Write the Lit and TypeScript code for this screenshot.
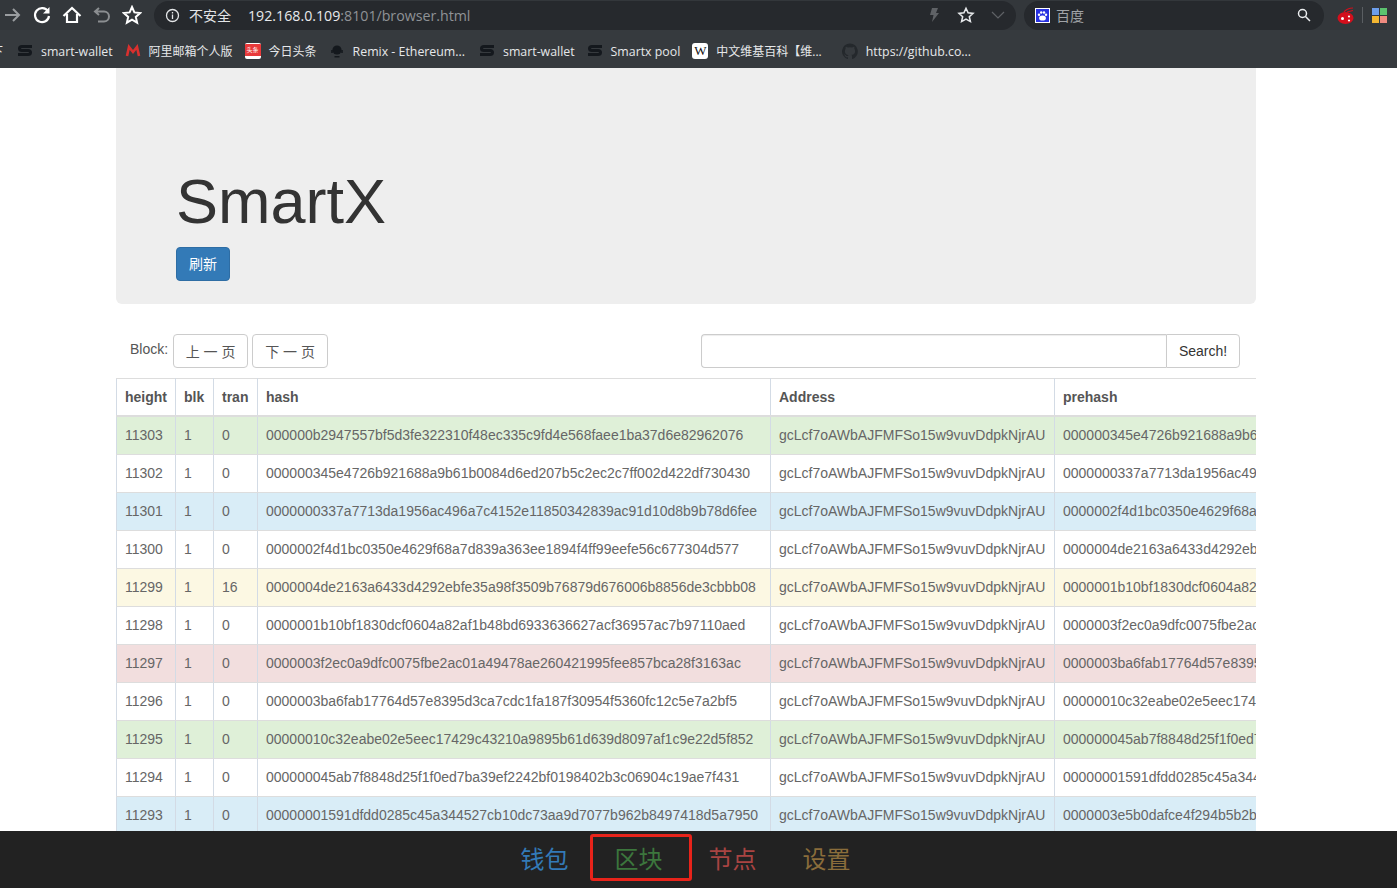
import { LitElement, html, css, svg } from 'lit';
import { customElement } from 'lit/decorators.js';

const ADDRESS = 'gcLcf7oAWbAJFMFSo15w9vuvDdpkNjrAU';

const rows = [
  { h: 11303, t: 0, cls: 'success', hash: '000000b2947557bf5d3fe322310f48ec335c9fd4e568faee1ba37d6e82962076' },
  { h: 11302, t: 0, cls: '', hash: '000000345e4726b921688a9b61b0084d6ed207b5c2ec2c7ff002d422df730430' },
  { h: 11301, t: 0, cls: 'info', hash: '0000000337a7713da1956ac496a7c4152e11850342839ac91d10d8b9b78d6fee' },
  { h: 11300, t: 0, cls: '', hash: '0000002f4d1bc0350e4629f68a7d839a363ee1894f4ff99eefe56c677304d577' },
  { h: 11299, t: 16, cls: 'warning', hash: '0000004de2163a6433d4292ebfe35a98f3509b76879d676006b8856de3cbbb08' },
  { h: 11298, t: 0, cls: '', hash: '0000001b10bf1830dcf0604a82af1b48bd6933636627acf36957ac7b97110aed' },
  { h: 11297, t: 0, cls: 'danger', hash: '0000003f2ec0a9dfc0075fbe2ac01a49478ae260421995fee857bca28f3163ac' },
  { h: 11296, t: 0, cls: '', hash: '0000003ba6fab17764d57e8395d3ca7cdc1fa187f30954f5360fc12c5e7a2bf5' },
  { h: 11295, t: 0, cls: 'success', hash: '00000010c32eabe02e5eec17429c43210a9895b61d639d8097af1c9e22d5f852' },
  { h: 11294, t: 0, cls: '', hash: '000000045ab7f8848d25f1f0ed7ba39ef2242bf0198402b3c06904c19ae7f431' },
  { h: 11293, t: 0, cls: 'info', hash: '00000001591dfdd0285c45a344527cb10dc73aa9d7077b962b8497418d5a7950' },
];
const LAST_PREHASH = '0000003e5b0dafce4f294b5b2b';

const sLogo = svg`<svg class="fav" viewBox="0 0 16 16"><path d="M15 3.500H5C3 3.500 2.500 4.500 2.500 5.500S3 7.500 5 7.500h6c2 0 2.500 1 2.500 2s-.5 2-2.500 2H1" fill="none" stroke="#14181d" stroke-width="3"/></svg>`;

const bookmarks = [
  { icon: sLogo, label: 'smart-wallet', cls: '' },
  { icon: svg`<svg class="fav" viewBox="0 0 16 16"><path d="M2 13 4 4l4 5 4-5 2 9" fill="none" stroke="#d9302e" stroke-width="2.600"/></svg>`, label: '阿里邮箱个人版', cls: 'cjk' },
  { icon: html`<span class="fav toutiao"><span>头条</span></span>`, label: '今日头条', cls: 'cjk' },
  { icon: svg`<svg class="fav" viewBox="0 0 16 16"><circle cx="8" cy="7" r="4.600" fill="#14181d"/><path d="M2.200 7h1.600v3H2.200zM12.200 7h1.600v3h-1.600zM5.500 13h5v1.400h-5z" fill="#14181d"/></svg>`, label: 'Remix - Ethereum...', cls: 'tail' },
  { icon: sLogo, label: 'smart-wallet', cls: '' },
  { icon: sLogo, label: 'Smartx pool', cls: '' },
  { icon: html`<span class="fav wiki"><span>W</span></span>`, label: '中文维基百科【维...', cls: 'cjk tail-wide' },
  { icon: svg`<svg class="fav" viewBox="0 0 16 16"><path d="M8 .4a8 8 0 0 0-2.500 15.600c.4.100.5-.2.500-.4v-1.400c-2.200.5-2.700-1-2.700-1-.4-.9-.9-1.200-.9-1.200-.7-.5.100-.5.100-.5.800.100 1.200.8 1.200.8.700 1.200 1.900.9 2.300.7.100-.5.300-.9.500-1.100-1.800-.2-3.600-.9-3.600-4 0-.9.300-1.600.8-2.100-.1-.2-.4-1 .1-2.100 0 0 .7-.2 2.200.8a7.500 7.500 0 0 1 4 0c1.500-1 2.200-.8 2.200-.8.400 1.100.2 1.900.1 2.100.5.600.8 1.300.8 2.100 0 3.100-1.900 3.700-3.700 3.900.3.300.6.800.6 1.500v2.200c0 .2.100.5.600.4A8 8 0 0 0 8 .4z" fill="#24282c"/></svg>`, label: 'https://github.co...', cls: '' },
];

@customElement('app-root')
export class AppRoot extends LitElement {
  static styles = css`
    :host {
      display: block;
      height: 888px;
      overflow: hidden;
      background: #fff;
      font-family: 'Liberation Sans', Arial, 'Noto Sans CJK SC', sans-serif;
      font-size: 14px;
      color: #333;
    }

    /* browser chrome */
    .toolbar {
      height: 30px;
      background: #33373b;
      display: flex;
      align-items: center;
      padding-right: 10px;
      box-sizing: border-box;
    }

    .nav-icons {
      width: 154px;
      display: flex;
      align-items: center;
      flex: none;
    }

    .nav-icons svg {
      width: 20px;
      height: 20px;
      margin-left: 10px;
      flex: none;
    }

    .nav-icons svg:first-child {
      margin-left: 2px;
    }

    .omnibox {
      width: 862px;
      height: 29px;
      border-radius: 15px;
      background: #26292d;
      display: flex;
      align-items: center;
      flex: none;
      box-sizing: border-box;
      padding: 0 11px 0 11px;
      color: #dfe1e3;
    }

    .omnibox .insecure {
      font-family: 'Noto Sans CJK SC', sans-serif;
      font-size: 14px;
      margin-left: 9px;
      padding-right: 17px;
      color: #e4e6e8;
    }

    .url {
      font-family: 'Open Sans', sans-serif;
      font-size: 14.200px;
      color: #8f9296;
    }

    .url b {
      font-weight: 400;
      color: #e8eaec;
    }

    .omni-right {
      margin-left: auto;
      display: flex;
      align-items: center;
      gap: 16px;
    }

    .searchbox {
      width: 300px;
      height: 29px;
      margin-left: 8px;
      border-radius: 15px;
      background: #26292d;
      display: flex;
      align-items: center;
      box-sizing: border-box;
      padding: 0 13px 0 11px;
      flex: none;
      font-family: 'Noto Sans CJK SC', sans-serif;
      font-size: 14px;
      color: #a0a3a7;
    }

    .paw {
      width: 15px;
      height: 15px;
      margin-right: 6px;
      flex: none;
    }

    .searchbox .mag {
      margin-left: auto;
    }

    .exts {
      display: flex;
      align-items: center;
      margin-left: 13px;
      flex: none;
    }

    .divider {
      width: 1px;
      height: 16px;
      background: #5a5e62;
      margin: 0 9px 0 7px;
    }

    .apps {
      width: 15px;
      height: 15px;
      display: grid;
      grid-template-columns: 7px 7px;
      grid-auto-rows: 7px;
      gap: 1px;
    }

    .bookmarks {
      height: 38px;
      box-sizing: border-box;
      padding: 4px 0 0 17px;
      background: #363a3e;
      display: flex;
      align-items: center;
      overflow: hidden;
      color: #e6e8ea;
      font-family: 'Open Sans', 'Noto Sans CJK SC', sans-serif;
      font-size: 12.350px;
      position: relative;
    }

    .bookmark {
      display: flex;
      align-items: center;
      gap: 8px;
      margin-right: 12px;
      white-space: nowrap;
    }

    .bookmark.cjk {
      font-size: 12px;
    }

    .bookmark.tail {
      margin-right: 14px;
    }

    .bookmark.tail-wide {
      margin-right: 20px;
    }

    .bookmarks .cut {
      position: absolute;
      left: -9px;
      font-size: 12px;
    }

    .fav {
      width: 16px;
      height: 16px;
      flex: none;
      display: inline-flex;
      align-items: center;
      justify-content: center;
    }

    .toutiao {
      background: #fff;
      border-radius: 2px;
      overflow: hidden;
    }

    .toutiao span {
      width: 16px;
      height: 12px;
      background: #e8393a;
      color: #fff;
      font-size: 6px;
      line-height: 12px;
      text-align: center;
      font-family: 'Noto Sans CJK SC', sans-serif;
      margin-bottom: 3px;
    }

    .wiki {
      background: #fff;
      border-radius: 3px;
      color: #111;
      font-family: 'Liberation Serif', serif;
      font-size: 13px;
    }

    /* page */
    .container {
      width: 1140px;
      margin: 0 auto 0 116px;
    }

    .jumbotron {
      height: 236px;
      box-sizing: border-box;
      background: #eee;
      border-radius: 0 0 6px 6px;
      padding: 99px 60px 0;
    }

    h1 {
      margin: 0;
      font-size: 63px;
      font-weight: 400;
      line-height: 69px;
      color: #333;
    }

    .btn {
      display: inline-flex;
      align-items: center;
      justify-content: center;
      box-sizing: border-box;
      height: 34px;
      border: 1px solid #ccc;
      border-radius: 4px;
      background: #fff;
      color: #333;
      font: inherit;
      padding: 0 12px;
    }

    .btn-primary {
      margin-top: 11px;
      width: 54px;
      padding: 0 0 2px;
      background: #337ab7;
      border-color: #2e6da4;
      color: #fff;
    }

    .controls {
      display: flex;
      align-items: center;
      height: 34px;
      margin-top: 30px;
      padding: 0 16px 0 14px;
    }

    .controls label {
      margin-right: 5px;
      margin-top: -4px;
      color: #555;
    }

    .pager {
      width: 75px;
      padding: 0;
      margin-right: 4px;
      color: #555;
    }

    .pager + .pager {
      width: 76px;
    }

    .search {
      margin-left: auto;
      display: flex;
      width: 539px;
      height: 34px;
    }

    .search .field {
      flex: 1;
      border: 1px solid #ccc;
      border-right: 0;
      border-radius: 4px 0 0 4px;
      box-shadow: inset 0 1px 1px rgba(0, 0, 0, 0.075);
      background: #fff;
    }

    .search .btn {
      width: 74px;
      padding: 0;
      border-radius: 0 4px 4px 0;
    }

    .table-wrap {
      margin-top: 10px;
      overflow: hidden;
    }

    table {
      border-collapse: collapse;
      table-layout: fixed;
      width: 1540px;
      white-space: nowrap;
      color: #666;
      line-height: 20px;
    }

    th,
    td {
      border: 1px solid #ddd;
      border-left-color: #d3dbe5;
      border-right-color: #d3dbe5;
      padding: 8px;
      text-align: left;
      height: 38px;
      box-sizing: border-box;
    }

    th {
      height: 37px;
      border-bottom-width: 2px;
      border-bottom-color: #ddd;
      color: #555;
    }

    .c-height { width: 59px; }
    .c-blk { width: 38px; }
    .c-tran { width: 44px; }
    .c-hash { width: 513px; }
    .c-address { width: 284px; }
    .c-prehash { width: 602px; }

    tr.success td { background: #dff0d8; }
    tr.info td { background: #d9edf7; }
    tr.warning td { background: #fcf8e3; }
    tr.danger td { background: #f2dede; }

    /* bottom nav */
    .tabbar {
      position: fixed;
      left: 0;
      right: 0;
      bottom: 0;
      height: 57px;
      background: #222;
      display: flex;
      justify-content: center;
      align-items: center;
      padding-right: 26px;
      box-sizing: border-box;
      font-family: 'Noto Sans CJK SC', sans-serif;
      font-size: 24px;
    }

    .tab {
      width: 94px;
      height: 47px;
      line-height: 47px;
      text-align: center;
      box-sizing: border-box;
      margin-top: -4px;
    }

    .tab.active {
      width: 102px;
      margin-left: -2px;
      margin-right: -6px;
      padding-right: 4px;
      border: 3px solid #e8231a;
      border-radius: 3px;
      line-height: 41px;
    }

    .blue { color: #337ab7; }
    .green { color: #3c763d; }
    .red { color: #a94442; }
    .brown { color: #8a6d3b; }
  `;

  render() {
    return html`
      <div class="toolbar">
        <div class="nav-icons">
          <svg viewBox="0 0 20 20" fill="none" stroke="#9a9da0" stroke-width="2"><path d="M3 10h14M11 4l6 6-6 6"/></svg>
          <svg viewBox="0 0 20 20" fill="none" stroke="#fff" stroke-width="2.200"><path d="M16 6.500A7 7 0 1 0 17 11"/><path d="M17.500 2v6.500H11z" fill="#fff" stroke="none"/></svg>
          <svg viewBox="0 0 20 20" fill="none" stroke="#fff" stroke-width="2.200"><path d="M1.500 11 10 3l8.500 8M5 9v8h10V9"/></svg>
          <svg viewBox="0 0 20 20" fill="none" stroke="#8b8e91" stroke-width="2"><path d="M7 3 3 6.500 7 10M3.500 6.500H12a4.500 4.500 0 0 1 0 10H6"/></svg>
          <svg viewBox="0 0 20 20" fill="none" stroke="#fff" stroke-width="2"><path d="m10 2 2.400 5.400 5.800.6-4.400 3.900 1.300 5.700-5.100-3-5.100 3 1.300-5.700L1.800 8l5.800-.6z"/></svg>
        </div>
        <div class="omnibox">
          <svg width="15" height="15" viewBox="0 0 15 15" fill="none" stroke="#e4e6e8" stroke-width="1.300"><circle cx="7.500" cy="7.500" r="6"/><path d="M7.500 6.500v4.500M7.500 4v1.500"/></svg>
          <span class="insecure">不安全</span>
          <span class="url"><b>192.168.0.109</b>:8101/browser.html</span>
          <span class="omni-right">
            <svg width="14" height="16" viewBox="0 0 14 16"><path d="M5 1h6L9 6h3l-7 9 1.500-7H3z" fill="#5f6266"/></svg>
            <svg width="18" height="18" viewBox="0 0 20 20" fill="none" stroke="#e6e8ea" stroke-width="1.700"><path d="m10 2.500 2.300 5.100 5.500.6-4.100 3.700 1.200 5.400-4.900-2.800-4.900 2.800 1.200-5.400-4.100-3.700 5.500-.6z"/></svg>
            <svg width="14" height="14" viewBox="0 0 14 14" fill="none" stroke="#5f6266" stroke-width="1.200"><path d="m1 4 6 6 6-6"/></svg>
          </span>
        </div>
        <div class="searchbox">
          <svg class="paw" viewBox="0 0 15 15"><rect width="15" height="15" fill="#fff"/><rect x="1" y="1" width="13" height="13" fill="#2932e1"/><ellipse cx="7.500" cy="10" rx="3.400" ry="2.600" fill="#fff"/><circle cx="4" cy="6.800" r="1.200" fill="#fff"/><circle cx="6.200" cy="4.500" r="1.200" fill="#fff"/><circle cx="9" cy="4.500" r="1.200" fill="#fff"/><circle cx="11" cy="6.800" r="1.200" fill="#fff"/></svg>
          百度
          <svg class="mag" width="14" height="14" viewBox="0 0 14 14" fill="none" stroke="#eceef0" stroke-width="1.500"><circle cx="5.500" cy="5.500" r="4"/><path d="m8.500 8.500 4.500 4.500"/></svg>
        </div>
        <div class="exts">
          <svg width="18" height="17" viewBox="0 0 18 17"><ellipse cx="8.500" cy="11" rx="8" ry="6" fill="#d40f1c"/><path d="M7 5c1-2 5-4 9-4M10 5l6-1.500" fill="none" stroke="#d40f1c" stroke-width="1.200"/><circle cx="5.500" cy="11.500" r="1.500" fill="#fff"/><circle cx="12" cy="13.500" r="1.100" fill="#fff"/><circle cx="12" cy="9.500" r="1.100" fill="#fff"/></svg>
          <span class="divider"></span>
          <span class="apps">
            <i style="background:#6d9eeb"></i><i style="background:#5cc26f"></i>
            <i style="background:#f2b632"></i><i style="background:#ef8a80"></i>
          </span>
        </div>
      </div>
      <div class="bookmarks">
        <span class="cut">下</span>
        ${bookmarks.map((b) => html`<span class="bookmark ${b.cls}">${b.icon}<span>${b.label}</span></span>`)}
      </div>

      <div class="container">
        <div class="jumbotron">
          <h1>SmartX</h1>
          <button class="btn btn-primary">刷新</button>
        </div>

        <div class="controls">
          <label>Block:</label>
          <button class="btn pager">上 一 页</button>
          <button class="btn pager">下 一 页</button>
          <div class="search">
            <div class="field"></div>
            <button class="btn">Search!</button>
          </div>
        </div>

        <div class="table-wrap">
          <table>
            <thead>
              <tr>
                <th class="c-height">height</th>
                <th class="c-blk">blk</th>
                <th class="c-tran">tran</th>
                <th class="c-hash">hash</th>
                <th class="c-address">Address</th>
                <th class="c-prehash">prehash</th>
              </tr>
            </thead>
            <tbody>
              ${rows.map(
                (r, i) => html`
                  <tr class=${r.cls}>
                    <td>${r.h}</td>
                    <td>1</td>
                    <td>${r.t}</td>
                    <td>${r.hash}</td>
                    <td>${ADDRESS}</td>
                    <td>${rows[i + 1] ? rows[i + 1].hash : LAST_PREHASH}</td>
                  </tr>
                `,
              )}
            </tbody>
          </table>
        </div>
      </div>

      <nav class="tabbar">
        <span class="tab blue">钱包</span>
        <span class="tab active green">区块</span>
        <span class="tab red">节点</span>
        <span class="tab brown">设置</span>
      </nav>
    `;
  }
}
